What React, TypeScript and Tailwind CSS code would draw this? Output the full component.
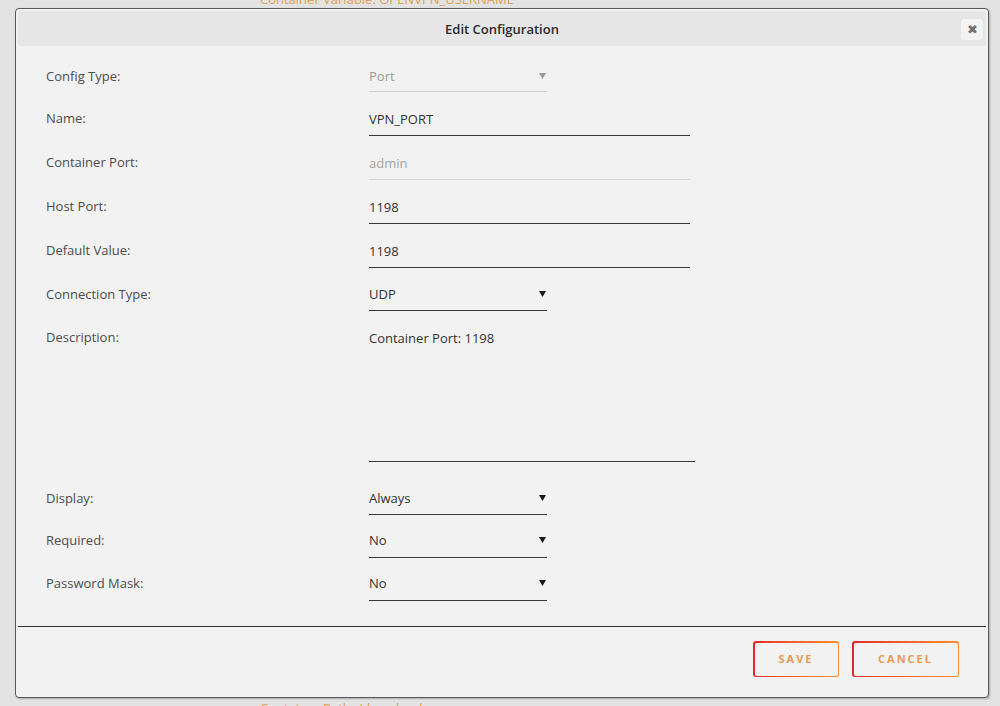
import type { ReactNode } from "react";

/* ── label + control row of the edit form ── */
function Row({
  label,
  children,
  h = "h-[44px]",
}: {
  label: string;
  children: ReactNode;
  h?: string;
}) {
  return (
    <div className={`flex ${h}`}>
      <label className="w-[323px] shrink-0 text-[13px] leading-5 text-[#4d4d4d]">
        {label}
      </label>
      <div className="min-w-0">{children}</div>
    </div>
  );
}

function Caret({ dim = false }: { dim?: boolean }) {
  return (
    <svg width="7" height="6" viewBox="0 0 7 6" className="shrink-0">
      <path d="M0 0H7L3.5 6Z" fill={dim ? "#9a9a9a" : "#1a1a1a"} />
    </svg>
  );
}

function Select({
  value,
  disabled = false,
  h = "h-[27px]",
}: {
  value: string;
  disabled?: boolean;
  h?: string;
}) {
  return (
    <div
      className={`flex ${h} w-[178px] items-start justify-between border-b pr-[1px] ${
        disabled ? "border-[#cfcfcf]" : "border-[#3a3a3a]"
      }`}
    >
      <span
        className={`text-[13px] leading-5 ${
          disabled ? "text-[#9d9d9d]" : "text-[#333]"
        }`}
      >
        {value}
      </span>
      <span className="mt-[7px]">
        <Caret dim={disabled} />
      </span>
    </div>
  );
}

function TextInput({ value, muted = false }: { value: string; muted?: boolean }) {
  return (
    <div
      className={`h-[28px] w-[321px] border-b pt-[1px] text-[13px] leading-5 ${
        muted ? "border-[#d6d6d6] text-[#a4a4a4]" : "border-[#3a3a3a] text-[#333]"
      }`}
    >
      {value}
    </div>
  );
}

function GradientButton({ children, w }: { children: ReactNode; w: string }) {
  return (
    <div className={`${w} h-[36px] rounded-[3px] bg-gradient-to-r from-[#e22828] to-[#ff8c2f] p-[1.5px]`}>
      <div className="flex h-full w-full items-center justify-center rounded-[2px] bg-[#f2f2f2] text-[11px] font-bold tracking-[2px] text-[#eb9a52]">
        {children}
      </div>
    </div>
  );
}

export default function App() {
  return (
    <div className="relative h-[706px] w-[1000px] overflow-hidden bg-[#e3e3e3] font-['Open_Sans',sans-serif]">
      {/* page content behind the dialog */}
      <p className="absolute left-[260px] top-[-11px] text-[13px] leading-5 text-[#e0a255]">
        Container Variable: OPENVPN_USERNAME
      </p>
      <p className="absolute left-[260px] top-[698px] text-[13px] leading-5 text-[#e0a255]">
        Container Path: /downloads
      </p>

      {/* dialog */}
      <div className="absolute left-[15px] top-[8px] flex h-[690px] w-[974px] flex-col rounded-[4px] border border-[#5a5a5a] bg-[#f2f2f2] p-[2px] shadow-[1px_1px_2px_rgba(0,0,0,0.25)]">
        <div className="relative flex h-[35px] items-center justify-center rounded-[3px] bg-[#e6e6e6] pt-[3px]">
          <span className="text-[13px] font-semibold text-[#2b2b2b]">Edit Configuration</span>
          <button className="absolute right-[3px] top-[8px] flex h-[21px] w-[22px] items-center justify-center rounded-[3px] bg-[#f3f3f3] text-[13px] leading-none text-[#707070]">
            ✖
          </button>
        </div>

        <div className="flex flex-col pl-[28px] pt-[20px]">
          <Row label="Config Type:" h="h-[42px]">
            <Select value="Port" disabled h="h-[26px]" />
          </Row>
          <Row label="Name:">
            <TextInput value="VPN_PORT" />
          </Row>
          <Row label="Container Port:">
            <TextInput value="admin" muted />
          </Row>
          <Row label="Host Port:">
            <TextInput value="1198" />
          </Row>
          <Row label="Default Value:">
            <TextInput value="1198" />
          </Row>
          <Row label="Connection Type:" h="h-[43px]">
            <Select value="UDP" />
          </Row>
          <Row label="Description:" h="h-[161px]">
            <div className="h-[135px] w-[326px] border-b border-[#3a3a3a] pt-[1px] text-[13px] leading-5 text-[#333]">
              Container Port: 1198
            </div>
          </Row>
          <Row label="Display:" h="h-[42px]">
            <Select value="Always" />
          </Row>
          <Row label="Required:" h="h-[43px]">
            <Select value="No" h="h-[28px]" />
          </Row>
          <Row label="Password Mask:" h="h-[28px]">
            <Select value="No" h="h-[28px]" />
          </Row>
        </div>

        <div className="mt-auto flex justify-end gap-[13px] border-t border-[#333] pb-[18px] pr-[27px] pt-[14px]">
          <GradientButton w="w-[86px]">SAVE</GradientButton>
          <GradientButton w="w-[107px]">CANCEL</GradientButton>
        </div>
      </div>
    </div>
  );
}
